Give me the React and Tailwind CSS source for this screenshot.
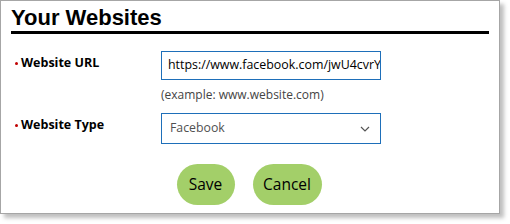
import React from "react";

export default function App() {
  return (
    <div className="w-[510px] h-[224px] bg-white">
      <div className="w-[500px] h-[214px] border border-[#a6a6a6] bg-white shadow-[4px_4px_4px_rgba(0,0,0,0.25)] pt-[4px] px-[10px]">
        <h1
          className="text-[22px] font-bold leading-[26px] text-black border-b-[3px] border-black pb-0"
          style={{ fontFamily: '"Liberation Sans", Arial, sans-serif' }}
        >
          Your Websites
        </h1>
        <div style={{ fontFamily: '"Open Sans", "Noto Sans", sans-serif' }}>
          <div className="flex mt-[17px]">
            <div className="w-[150px] pl-[4px] pt-[3px] flex items-start">
              <span className="w-[3px] h-[3px] bg-[#c00000] rounded-full mt-[8px] mr-[3px]"></span>
              <span className="text-[12.5px] font-bold text-black leading-[18px]">Website URL</span>
            </div>
            <div>
              <div className="w-[220px] h-[29px] border border-[#1e6fb9] flex items-center px-[6px] overflow-hidden">
                <span className="text-[12.4px] text-black whitespace-nowrap">https://www.facebook.com/jwU4cvrY</span>
              </div>
              <div className="text-[12px] text-[#444] mt-[7px] leading-[16px]">(example: www.website.com)</div>
            </div>
          </div>
          <div className="flex mt-[10px]">
            <div className="w-[150px] pl-[4px] pt-[3px] flex items-start">
              <span className="w-[3px] h-[3px] bg-[#c00000] rounded-full mt-[8px] mr-[3px]"></span>
              <span className="text-[12.5px] font-bold text-black leading-[18px]">Website Type</span>
            </div>
            <div className="w-[220px] h-[31px] border border-[#1e6fb9] flex items-center justify-between pl-[8px] pr-[10px]">
              <span className="text-[12.3px] text-[#505050]">Facebook</span>
              <svg width="10" height="6" viewBox="0 0 10 6" fill="none">
                <path d="M1 1 L5 5 L9 1" stroke="#555" strokeWidth="1.2" />
              </svg>
            </div>
          </div>
          <div className="flex justify-center gap-[18px] mt-[20px] pr-[2px]">
            <button className="w-[58px] h-[41px] rounded-full bg-[#a3cf69] text-[15.5px] text-black">Save</button>
            <button className="w-[69px] h-[41px] rounded-full bg-[#a3cf69] text-[15.5px] text-black">Cancel</button>
          </div>
        </div>
      </div>
    </div>
  );
}
